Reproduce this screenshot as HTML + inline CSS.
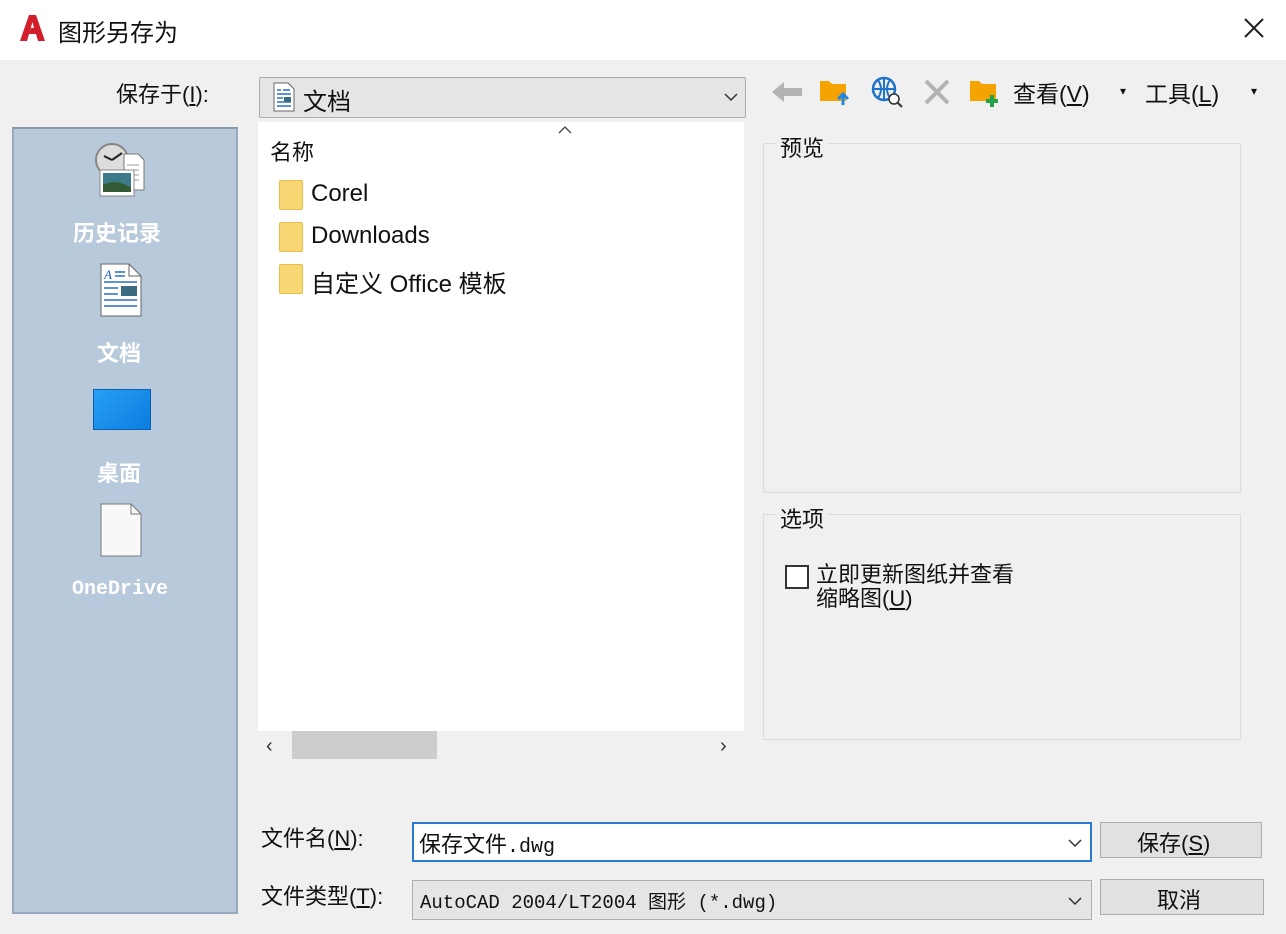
<!DOCTYPE html>
<html><head><meta charset="utf-8"><style>
*{margin:0;padding:0;box-sizing:border-box}
body{width:1286px;height:934px;background:#f0f0f0;position:relative;overflow:hidden;font-family:"Liberation Sans","Noto Sans CJK SC",sans-serif;color:#111}
.a{position:absolute}
.t{font-size:22px;white-space:nowrap}
.mono{font-family:"Liberation Mono","Noto Sans CJK SC",monospace}
</style></head><body>
<div class="a" style="left:0;top:0;width:1286px;height:60px;background:#fff"></div>
<svg class="a" style="left:17px;top:13px" width="30" height="30" viewBox="0 0 30 30"><path d="M3 28 L12 2 H19 L28 28 H21 L19 21 H12 L14 15 H17 L15.5 9 L10 28 Z" fill="#d21f2b"/></svg>
<div class="a t" style="left:58px;top:13px;font-size:24px">图形另存为</div>
<svg class="a" style="left:1242px;top:16px" width="24" height="24"><path d="M3 3L21 21M21 3L3 21" stroke="#222" stroke-width="2"/></svg>

<div class="a t" style="left:116px;top:77px">保存于(<u>I</u>):</div>
<div class="a" style="left:259px;top:77px;width:487px;height:41px;background:#e5e5e5;border:1px solid #adadad;border-radius:2px"></div>
<svg class="a" style="left:272px;top:82px" width="24" height="30"><path d="M2 1H16L22 7V29H2Z" fill="#fff" stroke="#666"/><path d="M5 8h4M11 8h7M5 12h14M5 16h6M5 20h14M5 24h14" stroke="#2a6fc0" stroke-width="1.5"/><rect x="12" y="15" width="7" height="5" fill="#3a6b80"/></svg>
<div class="a t" style="left:303px;top:82px;font-size:24px">文档</div>
<svg class="a" style="left:724px;top:92px" width="14" height="10"><path d="M1 2L7 8L13 2" fill="none" stroke="#333" stroke-width="1.5"/></svg>

<svg class="a" style="left:770px;top:79px" width="34" height="26"><path d="M2 13L14 3V9H32V17H14V23Z" fill="#b3b3b3"/></svg>
<svg class="a" style="left:818px;top:75px" width="34" height="34"><path d="M2 6H11L14 9H28V26H2Z" fill="#f5a300"/><path d="M25 30V20M20 24L25 19L30 24" stroke="#1e88e5" stroke-width="3" fill="none"/></svg>
<svg class="a" style="left:870px;top:75px" width="36" height="34"><circle cx="14" cy="14" r="11" fill="none" stroke="#1e73c8" stroke-width="2.5"/><path d="M3 14H25M14 3V25M8 5Q14 14 8 23M20 5Q14 14 20 23" stroke="#1e73c8" stroke-width="2" fill="none"/><circle cx="24" cy="24" r="5" fill="#fff" stroke="#333" stroke-width="1.5"/><path d="M28 28L32 32" stroke="#333" stroke-width="2"/></svg>
<svg class="a" style="left:923px;top:78px" width="28" height="28"><path d="M3 3L25 25M25 3L3 25" stroke="#b3b3b3" stroke-width="4"/></svg>
<svg class="a" style="left:968px;top:75px" width="34" height="34"><path d="M2 6H11L14 9H28V26H2Z" fill="#f5a300"/><path d="M24 20V32M18 26H30" stroke="#22a04a" stroke-width="4"/></svg>
<div class="a t" style="left:1013px;top:75px;font-size:23px">查看(<u>V</u>)</div>
<div class="a" style="left:1120px;top:84px;font-size:12px">▾</div>
<div class="a t" style="left:1145px;top:75px;font-size:23px">工具(<u>L</u>)</div>
<div class="a" style="left:1251px;top:84px;font-size:12px">▾</div>

<div class="a" style="left:12px;top:127px;width:226px;height:787px;background:#b9c9dc;border:2px solid #9aa9bb;border-top-color:#8a98a8"></div>
<svg class="a" style="left:92px;top:140px" width="60" height="62"><circle cx="20" cy="20" r="16" fill="#ddd" stroke="#888" stroke-width="2"/><path d="M20 20L12 16M20 20L30 13" stroke="#222" stroke-width="2"/><path d="M32 14H46L52 20V50H32Z" fill="#fff" stroke="#777"/><path d="M35 25h12M35 30h12M35 35h12M35 40h12" stroke="#999"/><rect x="8" y="30" width="34" height="26" fill="#fff" stroke="#888"/><rect x="11" y="33" width="28" height="19" fill="#3c7a88"/><path d="M11 45Q25 38 39 48V52H11Z" fill="#335a33"/></svg>
<div class="a t" style="left:73px;top:216px;color:#fff;font-weight:bold">历史记录</div>
<svg class="a" style="left:99px;top:262px" width="44" height="56"><path d="M2 2H30L42 14V54H2Z" fill="#fff" stroke="#666"/><path d="M30 2V14H42" fill="none" stroke="#666"/><text x="5" y="17" font-size="13" fill="#1e5fbd" font-style="italic" font-family="Liberation Serif">A</text><path d="M16 10h10M16 14h10M5 20h33M5 26h14M5 32h14M5 38h33M5 44h33" stroke="#2a6fc0" stroke-width="1.5"/><rect x="22" y="24" width="16" height="10" fill="#3a6b80"/></svg>
<div class="a t" style="left:97px;top:336px;color:#fff;font-weight:bold">文档</div>
<div class="a" style="left:93px;top:389px;width:58px;height:41px;background:linear-gradient(135deg,#28a0f5,#0a7de0);border:1px solid #0a5fb0"></div>
<div class="a t" style="left:97px;top:456px;color:#fff;font-weight:bold">桌面</div>
<svg class="a" style="left:99px;top:502px" width="44" height="56"><path d="M2 2H32L42 12V54H2Z" fill="#f8f8f8" stroke="#777"/><path d="M32 2V12H42" fill="none" stroke="#777"/></svg>
<div class="a mono" style="left:72px;top:578px;color:#fff;font-size:20px;font-weight:bold">OneDrive</div>

<div class="a" style="left:258px;top:122px;width:486px;height:609px;background:#fff"></div>
<svg class="a" style="left:557px;top:125px" width="16" height="10"><path d="M2 8L8 2L14 8" fill="none" stroke="#444" stroke-width="1.3"/></svg>
<div class="a t" style="left:270px;top:135px">名称</div>
<div class="a" style="left:279px;top:180px;width:24px;height:30px;background:#f9d775;border:1px solid #e6be4c;border-radius:2px"></div>
<div class="a t" style="left:311px;top:180px;font-size:24px">Corel</div>
<div class="a" style="left:279px;top:222px;width:24px;height:30px;background:#f9d775;border:1px solid #e6be4c;border-radius:2px"></div>
<div class="a t" style="left:311px;top:222px;font-size:24px">Downloads</div>
<div class="a" style="left:279px;top:264px;width:24px;height:30px;background:#f9d775;border:1px solid #e6be4c;border-radius:2px"></div>
<div class="a t" style="left:311px;top:264px;font-size:24px">自定义 Office 模板</div>
<div class="a" style="left:266px;top:735px;font-size:20px;color:#333">‹</div>
<div class="a" style="left:292px;top:731px;width:145px;height:28px;background:#cdcdcd"></div>
<div class="a" style="left:720px;top:735px;font-size:20px;color:#333">›</div>

<div class="a" style="left:763px;top:143px;width:478px;height:350px;border:1px solid #dcdcdc"></div>
<div class="a t" style="left:776px;top:131px;background:#f0f0f0;padding:0 4px">预览</div>
<div class="a" style="left:763px;top:514px;width:478px;height:226px;border:1px solid #dcdcdc"></div>
<div class="a t" style="left:776px;top:502px;background:#f0f0f0;padding:0 4px">选项</div>
<div class="a" style="left:785px;top:565px;width:24px;height:24px;border:2px solid #333;background:#fff"></div>
<div class="a t" style="left:816px;top:563px;line-height:24px">立即更新图纸并查看<br>缩略图(<u>U</u>)</div>

<div class="a t" style="left:261px;top:821px">文件名(<u>N</u>):</div>
<div class="a" style="left:412px;top:822px;width:680px;height:40px;background:#fff;border:2px solid #2a7bd4"></div>
<div class="a t" style="left:419px;top:827px">保存文件<span class="mono" style="font-size:20px">.dwg</span></div>
<svg class="a" style="left:1068px;top:838px" width="14" height="10"><path d="M1 2L7 8L13 2" fill="none" stroke="#333" stroke-width="1.5"/></svg>
<div class="a" style="left:1100px;top:822px;width:162px;height:36px;background:#e1e1e1;border:1px solid #adadad"></div>
<div class="a t" style="left:1137px;top:826px">保存(<u>S</u>)</div>

<div class="a t" style="left:261px;top:879px">文件类型(<u>T</u>):</div>
<div class="a" style="left:412px;top:880px;width:680px;height:40px;background:#e5e5e5;border:1px solid #adadad"></div>
<div class="a t mono" style="left:420px;top:887px;font-size:19px">AutoCAD 2004/LT2004 图形 (*.dwg)</div>
<svg class="a" style="left:1068px;top:896px" width="14" height="10"><path d="M1 2L7 8L13 2" fill="none" stroke="#333" stroke-width="1.5"/></svg>
<div class="a" style="left:1100px;top:879px;width:164px;height:36px;background:#e1e1e1;border:1px solid #adadad"></div>
<div class="a t" style="left:1157px;top:883px">取消</div>
</body></html>
